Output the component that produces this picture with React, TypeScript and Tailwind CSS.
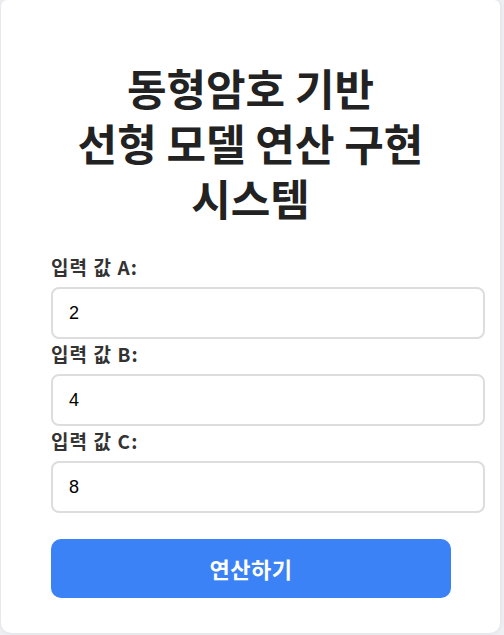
import React from "react";

function Field({ label, value, last }: { label: string; value: string; last?: boolean }) {
  return (
    <div className={last ? "flex flex-col" : "flex flex-col mb-[4px]"}>
      <label className="block font-['Noto_Sans_CJK_KR','Noto_Sans',sans-serif] text-[19px] leading-[22px] font-bold text-[#333] mb-[9px] tracking-[1.1px]">
        {label}
      </label>
      <input
        readOnly
        value={value}
        className="block w-[434px] h-[52px] pl-[16px] pr-[15px] border-2 border-[#dddddd] rounded-[8px] bg-white font-['Liberation_Sans',Arial,sans-serif] text-[18px] text-black outline-none"
      />
    </div>
  );
}

export default function App() {
  return (
    <div className="min-h-[635px] w-[504px] bg-[#eef0f3] overflow-hidden">
      <div className="ml-px w-[499px] h-[633px] bg-white rounded-b-[10px] rounded-t-[6px] shadow-[0_0_6px_rgba(0,0,0,0.08)] px-[50px] pt-[60px]">
        <h1 className="flex flex-col items-center text-center font-['Noto_Sans_CJK_KR','Noto_Sans',sans-serif] text-[43px] font-bold text-[#222] mb-[31px]">
          <span className="block h-[55px] leading-[55px]">동형암호 기반</span>
          <span className="block h-[55px] leading-[55px]">선형 모델 연산 구현</span>
          <span className="block h-[55px] leading-[55px]">시스템</span>
        </h1>
        <Field label="입력 값 A:" value="2" />
        <Field label="입력 값 B:" value="4" />
        <Field label="입력 값 C:" value="8" last />
        <button className="mt-[26px] w-[400px] h-[59px] bg-[#3b82f6] rounded-[10px] text-white font-['Noto_Sans_CJK_KR','Noto_Sans',sans-serif] text-[22px] font-bold tracking-[0.5px] flex items-center justify-center">
          연산하기
        </button>
      </div>
    </div>
  );
}
